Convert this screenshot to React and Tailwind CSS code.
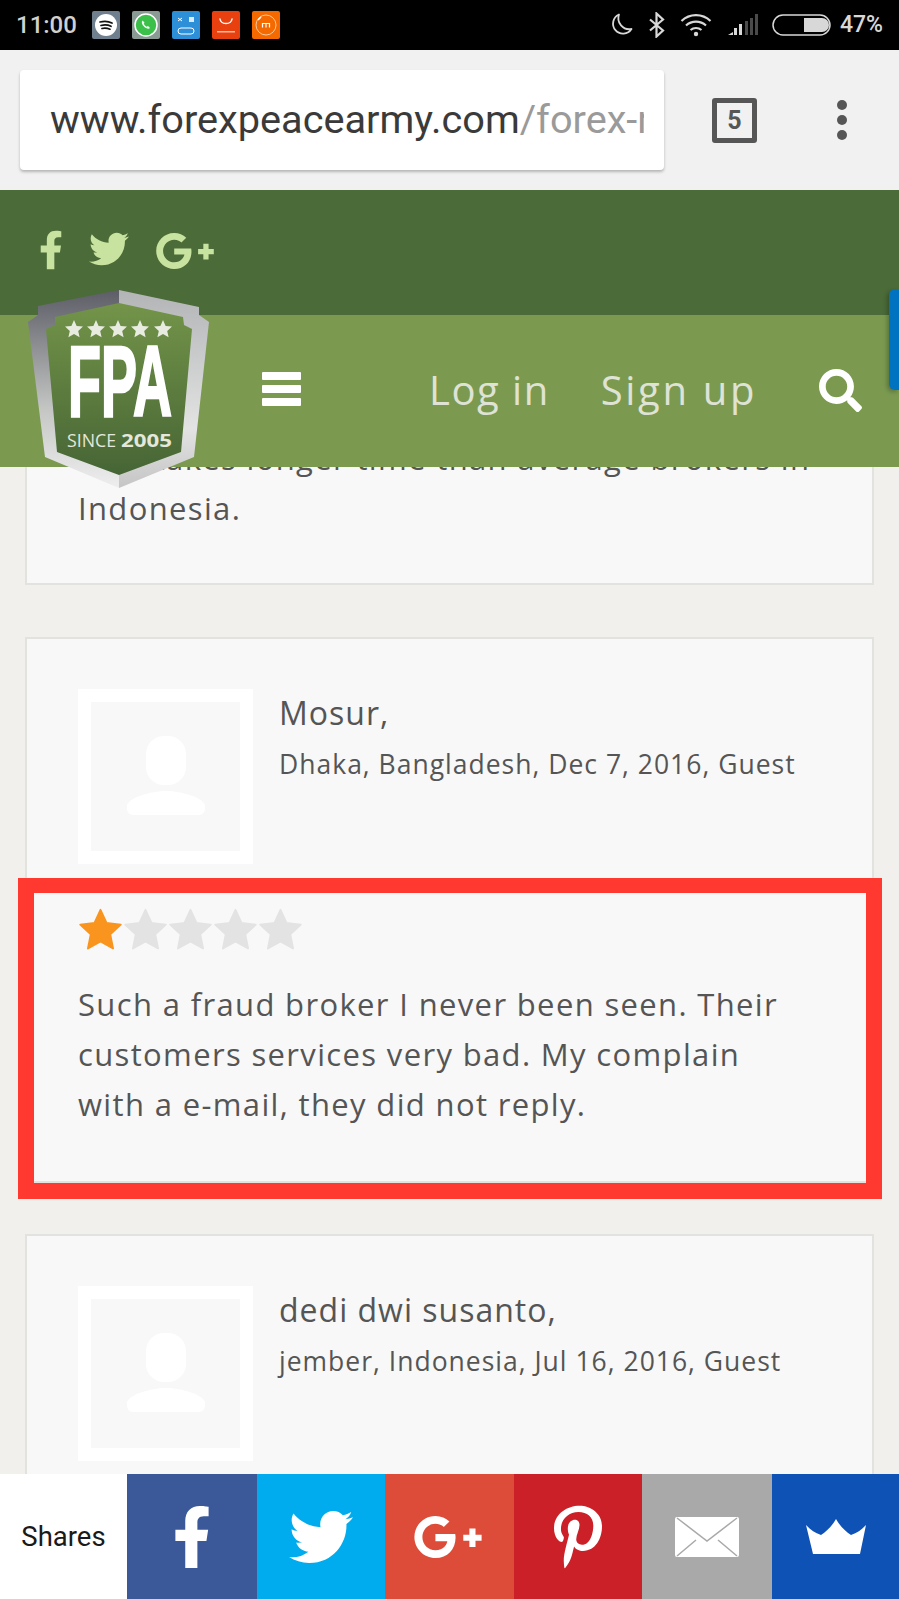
import React from 'react';
import { FaFacebookF, FaTwitter, FaGooglePlusG, FaPinterestP, FaSearch } from 'react-icons/fa';

const BODY_FONT = "font-['Open_Sans',sans-serif]";

function Star({ color, size = 45 }) {
  return (
    <svg width={size} height={size} viewBox="0 0 24 24" className="shrink-0">
      <path
        fill={color}
        stroke={color}
        strokeWidth="1"
        strokeLinejoin="round"
        d="M12 1.500l3.200 7 7.600.9-5.600 5.200 1.500 7.500L12 18.300l-6.700 3.800 1.500-7.500L1.200 9.400l7.600-.9z"
      />
    </svg>
  );
}

function AppIcon({ bg, children }) {
  return (
    <div className={`w-[28px] h-[28px] rounded-[2px] flex items-center justify-center ${bg}`}>
      <svg width="28" height="28" viewBox="0 0 28 28">
        {children}
      </svg>
    </div>
  );
}

function StatusBar() {
  return (
    <div className="h-[50px] bg-black flex items-center justify-between pl-[16px] pr-[16px]">
      <div className="flex items-center gap-[12px]">
        <span className="font-['Roboto',sans-serif] font-medium text-[24px] text-[#d0d0d0] w-[64px]">11:00</span>
        <AppIcon bg="bg-[#6f7f8e]">
          <circle cx="14" cy="14" r="11" fill="#fff" />
          <path d="M8 11c4-1 8-1 12 1M9 14.500c3-.8 7-.7 10 .8M10 17.500c2.500-.6 5-.5 8 .7" stroke="#111" strokeWidth="1.700" fill="none" strokeLinecap="round" />
        </AppIcon>
        <AppIcon bg="bg-[#8a9a94]">
          <circle cx="14" cy="14" r="11" fill="#3bc14a" stroke="#fff" strokeWidth="1.500" />
          <path d="M10.500 9.500c-1.500 1.500-.5 4 1.500 6s4.500 3 6 1.500l-2-2-1.300.8c-1-.5-2.500-2-3-3l.8-1.300z" fill="#fff" />
        </AppIcon>
        <AppIcon bg="bg-[#2d8fd8]">
          <path d="M6 10l4-3M6 7l4 3" stroke="#fff" strokeWidth="1" />
          <rect x="17" y="6" width="5" height="5" fill="#dbeafe" />
          <rect x="6" y="17" width="16" height="6" rx="3" fill="none" stroke="#fff" strokeWidth="1" />
        </AppIcon>
        <AppIcon bg="bg-[#e8400f]">
          <path d="M8 8c1 6 11 6 12 0" stroke="#fff" strokeWidth="1.500" fill="none" strokeLinecap="round" />
          <rect x="5" y="20" width="18" height="1.500" fill="#f8b9a0" />
        </AppIcon>
        <AppIcon bg="bg-[#f56a00]">
          <circle cx="14" cy="14" r="10" fill="none" stroke="#fbc79d" strokeWidth="1" />
          <path d="M6 9l3-3" stroke="#fff" strokeWidth="1.500" />
          <path d="M10.500 16.500v-4h7v4M14 12.500v4" stroke="#fff" strokeWidth="1.200" fill="none" />
        </AppIcon>
      </div>
      <div className="flex items-center">
        <svg width="24" height="26" viewBox="0 0 24 26" className="mr-[14px]">
          <path d="M9 2.500a10 10 0 1 0 12.500 14.500A11 11 0 0 1 9 2.500z" fill="none" stroke="#d8d8d8" strokeWidth="1.800" strokeLinejoin="round" />
        </svg>
        <svg width="18" height="26" viewBox="0 0 18 26" className="mr-[14px]">
          <path d="M2 7.500l13 11-6.500 6V1.500L15 7.500l-13 11" fill="none" stroke="#d8d8d8" strokeWidth="2.200" />
        </svg>
        <svg width="32" height="24" viewBox="0 0 32 24" className="mr-[16px]">
          <path d="M1.500 8a21 21 0 0 1 29 0M6 12.500a15 15 0 0 1 20 0M10.500 17a8.500 8.500 0 0 1 11 0" fill="none" stroke="#d8d8d8" strokeWidth="2.200" />
          <circle cx="16" cy="21" r="2.200" fill="#d8d8d8" />
        </svg>
        <svg width="32" height="22" viewBox="0 0 32 22" className="mr-[12px]">
          <path d="M0 21l5-3v3z" fill="#d8d8d8" />
          <rect x="6" y="14" width="3" height="7" fill="#d8d8d8" />
          <rect x="11" y="10" width="3" height="11" fill="#d8d8d8" />
          <rect x="17" y="7" width="3" height="14" fill="#4a4a4a" />
          <rect x="22" y="4" width="3" height="17" fill="#4a4a4a" />
          <rect x="27" y="0" width="3" height="21" fill="#4a4a4a" />
        </svg>
        <svg width="60" height="22" viewBox="0 0 60 22" className="mr-[8px]">
          <rect x="1" y="1" width="57" height="20" rx="10" fill="none" stroke="#d8d8d8" strokeWidth="1.500" />
          <path d="M32 4h18a7 7 0 0 1 0 14H32z" fill="#d8d8d8" />
        </svg>
        <span className="font-['Roboto',sans-serif] font-medium text-[23px] text-[#d8d8d8]">47%</span>
      </div>
    </div>
  );
}

function BrowserBar() {
  return (
    <div className="h-[140px] bg-[#f1f1f1] flex items-center pl-[20px]">
      <div className="w-[644px] h-[100px] bg-white rounded-[4px] shadow-[0_2px_3px_rgba(0,0,0,0.25)] flex items-center pl-[30px] pr-[20px] overflow-hidden">
        <span className="font-['Roboto',sans-serif] text-[39.700px] text-[#3a3a3a] whitespace-nowrap overflow-hidden">
          www.forexpeacearmy.com<span className="text-[#9a9a9a]">/forex-reviews</span>
        </span>
      </div>
      <div className="ml-[48px] w-[45px] h-[45px] border-[5px] border-[#565656] rounded-[3px] flex items-center justify-center">
        <span className="font-['Roboto',sans-serif] font-bold text-[25px] text-[#565656] leading-none">5</span>
      </div>
      <div className="ml-[80px] flex flex-col gap-[5px]">
        <div className="w-[10px] h-[10px] rounded-full bg-[#565656]" />
        <div className="w-[10px] h-[10px] rounded-full bg-[#565656]" />
        <div className="w-[10px] h-[10px] rounded-full bg-[#565656]" />
      </div>
    </div>
  );
}

function Logo() {
  return (
    <svg width="184" height="206" viewBox="0 0 184 206" className="absolute left-[27px] top-[289px]">
      <defs>
        <linearGradient id="rim" x1="0" y1="0" x2="0" y2="1">
          <stop offset="0" stopColor="#5c5d66" />
          <stop offset="0.6" stopColor="#c4c6c4" />
          <stop offset="1" stopColor="#eeeeee" />
        </linearGradient>
        <linearGradient id="rimRight" x1="0" y1="0" x2="0" y2="1">
          <stop offset="0" stopColor="#b3b4b6" />
          <stop offset="0.7" stopColor="#e2e3e2" />
          <stop offset="1" stopColor="#c4c5c4" />
        </linearGradient>
        <linearGradient id="shield" x1="0" y1="0" x2="0" y2="1">
          <stop offset="0" stopColor="#739449" />
          <stop offset="1" stopColor="#466535" />
        </linearGradient>
      </defs>
      <path d="M92 1V199L18 168L1 33L11 26V17z" fill="url(#rim)" />
      <path d="M92 1L172 18V26L182 33L167 168L92 199z" fill="url(#rimRight)" />
      <path d="M92 14L156 28L157 36L165 40L154 163L92 186L30 163L19 40L28 36V28z" fill="url(#shield)" />
      <g fill="#e8ece0">
        {[47, 69, 91, 113, 136].map((x) => (
          <path
            key={x}
            transform={`translate(${x - 9} 31)`}
            d="M9 0l2.600 6 6.400.6-4.800 4.300 1.400 6.300L9 14l-5.600 3.200 1.400-6.300L0 6.600 6.400 6z"
          />
        ))}
      </g>
      <text x="41" y="127" textLength="104" lengthAdjust="spacingAndGlyphs" fill="#fff" stroke="#fff" strokeWidth="2.500" fontFamily="'Liberation Sans',sans-serif" fontWeight="700" fontSize="100">
        FPA
      </text>
      <text x="40" y="158" textLength="49" lengthAdjust="spacingAndGlyphs" fill="#e4e8dc" fontFamily="'Open Sans',sans-serif" fontSize="18">
        SINCE
      </text>
      <text x="94" y="158" textLength="51" lengthAdjust="spacingAndGlyphs" fill="#e4e8dc" fontFamily="'Open Sans',sans-serif" fontWeight="700" fontSize="18">
        2005
      </text>
    </svg>
  );
}

function SiteHeader() {
  return (
    <div>
      <div className="h-[125px] bg-[#4b6b38] flex items-start pl-[39px] pt-[39px] gap-[26px] text-[#c8e3a0]">
        <FaFacebookF className="w-[24px] h-[42px]" />
        <FaTwitter className="w-[40px] h-[40px]" />
        <FaGooglePlusG className="w-[60px] h-[48px] -mt-[2px]" />
      </div>
      <div className="h-[152px] bg-[#7b9a50] flex items-center">
        <div className="ml-[262px] -mt-[5px] w-[39px] flex flex-col gap-[5px]">
          <div className="h-[8px] rounded-[1px] bg-white" />
          <div className="h-[8px] rounded-[1px] bg-white" />
          <div className="h-[8px] rounded-[1px] bg-white" />
        </div>
        <span className={`ml-[128px] -mt-[3px] text-[40px] tracking-[1.500px] text-[#dfe3d6] ${BODY_FONT}`}>Log in</span>
        <span className={`ml-[51px] -mt-[3px] text-[40px] tracking-[2.700px] text-[#dfe3d6] ${BODY_FONT}`}>Sign up</span>
        <FaSearch className="ml-[62px] -mt-[1px] w-[43px] h-[43px] text-white" />
      </div>
    </div>
  );
}

function Avatar() {
  return (
    <div className="w-[175px] h-[175px] shrink-0 border-[13px] border-white bg-[#f8f8f8] flex items-center justify-center">
      <svg width="80" height="82" viewBox="0 0 80 82">
        <rect x="20" y="0" width="40" height="49" rx="18" fill="#fff" />
        <path d="M1 70c0-8 24-15 39-15s39 7 39 15v3a6 6 0 0 1-6 6H7a6 6 0 0 1-6-6z" fill="#fff" />
      </svg>
    </div>
  );
}

function ReviewCard({ name, meta, children }) {
  return (
    <div className={`h-[546px] border-2 border-[#e2e2df] bg-[#f8f8f8] pl-[51px] pr-[30px] pt-[50px] ${BODY_FONT} text-[#555555]`}>
      <div className="flex gap-[26px]">
        <Avatar />
        <div className="pt-[6px]">
          <div className="text-[32px] tracking-[1px] leading-[36px]">{name}</div>
          <div className="text-[26.500px] tracking-[1px] leading-[36px] mt-[15px] whitespace-nowrap">{meta}</div>
        </div>
      </div>
      {children}
    </div>
  );
}

function Reviews() {
  return (
    <div className="flex-1 overflow-hidden bg-[#f1f0ed] px-[25px] flex flex-col">
      <div className={`shrink-0 h-[152px] border-2 border-t-0 border-[#e2e2df] bg-[#f8f8f8] pl-[51px] ${BODY_FONT} text-[#555555] text-[31px] tracking-[1.350px] leading-[50px] -mt-[34px]`}>
        <div className="whitespace-nowrap">Also takes longer time than average brokers in</div>
        <div>Indonesia.</div>
      </div>
      <div className="shrink-0 mt-[52px]">
        <ReviewCard name="Mosur," meta="Dhaka, Bangladesh, Dec 7, 2016, Guest">
          <div className="flex mt-[43px]">
            <Star color="#f9951e" />
            <Star color="#e3e3e3" />
            <Star color="#e3e3e3" />
            <Star color="#e3e3e3" />
            <Star color="#e3e3e3" />
          </div>
          <p className="mt-[27px] max-w-[730px] text-[31px] tracking-[1.350px] leading-[50px]">
            Such a fraud broker I never been seen. Their customers services very bad. My complain with a e-mail, they did not reply.
          </p>
        </ReviewCard>
      </div>
      <div className="shrink-0 mt-[51px]">
        <ReviewCard name="dedi dwi susanto," meta="jember, Indonesia, Jul 16, 2016, Guest" />
      </div>
    </div>
  );
}

function ShareBar() {
  return (
    <div className="h-[125px] flex bg-white text-white shrink-0">
      <div className="w-[127px] flex items-center justify-center font-['Roboto',sans-serif] text-[27.500px] text-[#1a1a1a]">Shares</div>
      <div className="w-[130px] bg-[#3b5998] flex items-center justify-center">
        <FaFacebookF className="w-[50px] h-[62px]" />
      </div>
      <div className="w-[128px] bg-[#00aced] flex items-center justify-center">
        <FaTwitter className="w-[64px] h-[64px]" />
      </div>
      <div className="w-[129px] bg-[#dd4b39] flex items-center justify-center">
        <FaGooglePlusG className="w-[72px] h-[56px] -ml-[4px]" />
      </div>
      <div className="w-[128px] bg-[#cb2027] flex items-center justify-center">
        <FaPinterestP className="w-[50px] h-[64px]" />
      </div>
      <div className="w-[130px] bg-[#a9a9a9] flex items-center justify-center">
        <svg width="64" height="40" viewBox="0 0 64 40">
          <rect width="64" height="40" rx="2" fill="#fff" />
          <path d="M2 1l30 23L62 1M2 39l19-16M62 39L43 23" fill="none" stroke="#a9a9a9" strokeWidth="1.500" />
        </svg>
      </div>
      <div className="flex-1 bg-[#0f52b5] flex items-center justify-center">
        <svg width="60" height="35" viewBox="0 0 60 35">
          <path d="M0 6C5 11 9 14 15 16C21 12 26 7 30 0C34 7 39 12 45 16C51 14 55 11 60 6L54 35H7z" fill="#fff" />
        </svg>
      </div>
    </div>
  );
}

export default function App() {
  return (
    <div className="relative w-[899px] h-[1599px] overflow-hidden flex flex-col bg-[#f1f0ed]">
      <StatusBar />
      <BrowserBar />
      <div className="relative z-10">
        <SiteHeader />
      </div>
      <Reviews />
      <ShareBar />
      {/* overlays */}
      <div className="absolute z-20 left-0 top-0 w-full h-0">
        <Logo />
      </div>
      <div className="absolute z-20 right-0 top-[289px] w-[10px] h-[101px] bg-[#0073c0] rounded-l-[6px] shadow-[-2px_2px_4px_rgba(0,0,0,0.25)]" />
      <div className="absolute z-20 left-[18px] top-[878px] w-[864px] h-[321px] border-x-[16px] border-t-[15px] border-b-[16px] border-[#ff3830]" />
    </div>
  );
}
